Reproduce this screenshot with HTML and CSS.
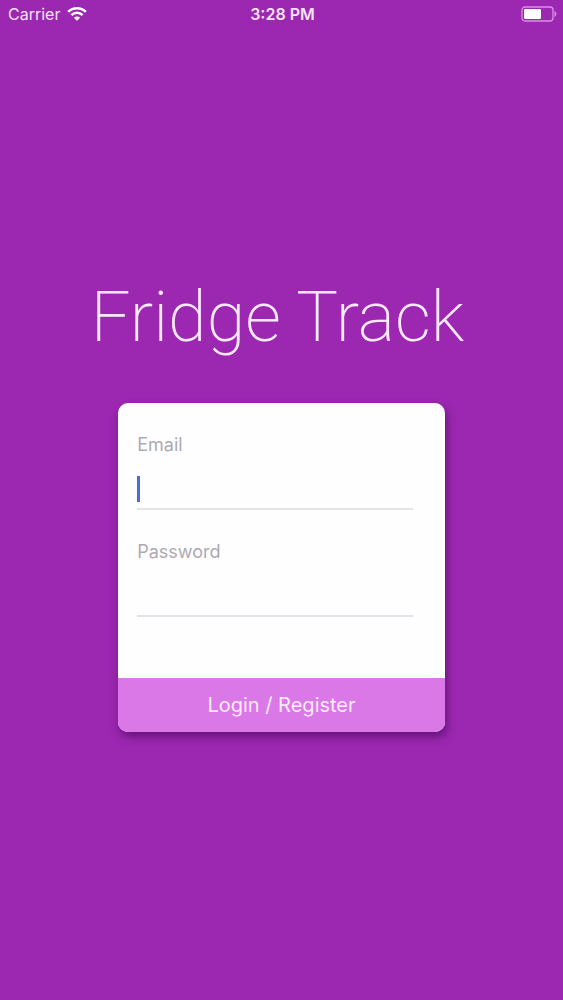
FILE: index.html
```html
<!DOCTYPE html>
<html lang="en">
<head>
    <meta charset="UTF-8">
    <meta name="viewport" content="width=device-width, initial-scale=1.0">
    <title>Fridge Track</title>
    <link rel="stylesheet" href="styles.css">
</head>
<body>
    <header class="status-bar">
        <div class="carrier">
            <span>Carrier</span>
            <svg class="wifi" viewBox="0 0 20 14" width="20" height="14" aria-hidden="true">
                <path d="M1.2 4.9a12.6 12.6 0 0 1 17.6 0" />
                <path d="M4.4 8.1a8 8 0 0 1 11.2 0" />
                <path class="wifi-dot" d="M10 13.8L6.9 10.7a4.4 4.4 0 0 1 6.2 0z" />
            </svg>
        </div>
        <div class="time">3:28 PM</div>
        <div class="battery">
            <svg viewBox="0 0 36 16" width="36" height="16" aria-hidden="true">
                <rect class="battery-case" x="1" y="1" width="31" height="14" rx="3" />
                <rect class="battery-level" x="3" y="3" width="17" height="10" rx="1" />
                <path class="battery-tip" d="M33.5 5c2.4 1 2.4 5 0 6z" />
            </svg>
        </div>
    </header>

    <main>
        <h1>Fridge Track</h1>

        <form class="card">
            <div class="fields">
                <div class="field">
                    <label for="email">Email</label>
                    <div class="entry active">
                        <input type="email" id="email" name="email">
                    </div>
                </div>
                <div class="field">
                    <label for="password">Password</label>
                    <div class="entry">
                        <input type="password" id="password" name="password">
                    </div>
                </div>
            </div>
            <button type="submit">Login / Register</button>
        </form>
    </main>
</body>
</html>
```

FILE: styles.css
```css
* {
    box-sizing: border-box;
}
body {
    margin: 0;
    min-height: 100vh;
    display: flex;
    flex-direction: column;
    background-color: #9c27b0;
    color: #fff;
    font-family: Inter, "Liberation Sans", sans-serif;
}

/* Status bar */
.status-bar {
    display: grid;
    grid-template-columns: 1fr auto 1fr;
    align-items: center;
    height: 28px;
    padding: 0 6px 0 8px;
    font-size: 16px;
    color: #f8e3fb;
}
.carrier {
    display: flex;
    align-items: center;
    gap: 7px;
}
.wifi {
    fill: none;
    stroke: #fff;
    stroke-width: 2.6;
}
.wifi-dot {
    fill: #fff;
    stroke: none;
}
.time {
    font-weight: 600;
}
.battery {
    display: flex;
    justify-content: flex-end;
}
.battery-case {
    fill: none;
    stroke: #d893e3;
    stroke-width: 1.3;
}
.battery-level {
    fill: #fff;
}
.battery-tip {
    fill: #d893e3;
}

main {
    flex: 1;
    display: flex;
    flex-direction: column;
    align-items: center;
    justify-content: center;
    padding-bottom: 26px;
}
h1 {
    margin: 0 8px 39px 0;
    font-family: Roboto, Inter, sans-serif;
    font-size: 70px;
    font-weight: 200;
    line-height: 94px;
    color: #fdeaff;
    white-space: nowrap;
}

/* Login card */
.card {
    width: 58%;
    overflow: hidden;
    border-radius: 10px;
    background-color: #fefdff;
    box-shadow: 2px 5px 8px rgba(50, 0, 70, 0.5);
}
.fields {
    display: flex;
    flex-direction: column;
    gap: 24px;
    padding: 24px 32px 61px 19px;
}
.field label {
    display: block;
    font-size: 18px;
    line-height: 35px;
    color: #adabaf;
}
.entry {
    position: relative;
    height: 48px;
    border-bottom: 2px solid #e6e3e8;
}
.entry input {
    width: 100%;
    height: 100%;
    padding: 0;
    border: none;
    outline: none;
    background: transparent;
    font: inherit;
    font-size: 18px;
    color: #333;
}
.entry.active::before {
    content: "";
    position: absolute;
    left: 0;
    top: 14px;
    width: 3px;
    height: 26px;
    background-color: #4a6fd4;
}
button {
    display: block;
    width: 100%;
    height: 54px;
    padding: 0;
    border: none;
    background-color: #db78e8;
    font-family: inherit;
    font-size: 20px;
    color: #fdeaff;
}
```
